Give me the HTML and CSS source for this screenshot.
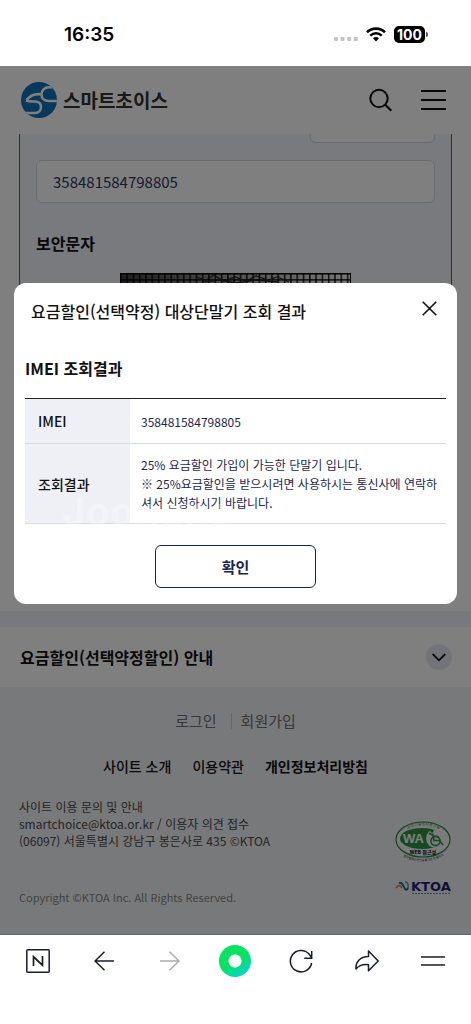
FILE: index.html
```
<!DOCTYPE html>
<html lang="ko">
<head>
  <meta charset="UTF-8">
  <meta name="viewport" content="width=device-width, initial-scale=1">
  <title>스마트초이스</title>
  <link rel="stylesheet" href="styles.css">
</head>
<body>
  <div class="status-bar">
    <span class="time">16:35</span>
    <div class="status-icons">
      <svg class="signal" width="24" height="4" viewBox="0 0 24 4" fill="#c4c4c4"><rect width="4" height="4" rx="1"/><rect x="6.6" width="4" height="4" rx="1"/><rect x="13.2" width="4" height="4" rx="1"/><rect x="19.8" width="4" height="4" rx="1"/></svg>
      <svg width="20" height="15" viewBox="0 0 20 15" fill="none" stroke="#000"><path d="M1 5.2C6 .4 14 .4 19 5.2" stroke-width="2.6"/><path d="M4.3 8.6c3.3-3 8.1-3 11.4 0" stroke-width="2.5"/><path d="M7 11.2c1.7-1.7 4.3-1.7 6 0l-3 3.300z" fill="#000" stroke="none"/></svg>
      <span class="battery">100</span>
    </div>
  </div>

  <div class="viewport">
    <header class="site-header">
      <a href="#" class="logo">
        <svg width="36" height="36" viewBox="0 0 36 36">
          <defs><clipPath id="disc"><circle cx="18" cy="18" r="18"/></clipPath></defs>
          <circle cx="18" cy="18" r="18" fill="#1070b8"/>
          <g clip-path="url(#disc)" fill="none" stroke="#fff" stroke-width="2.6">
            <path d="M37 19H28c-5 0-7.500-3-7.500-6.500 0-4 3-7.200 7.500-7.200h7"/>
            <path d="M20 12.300c-6-1-10.500 1-14.500 5.700" stroke-width="2.8"/>
            <path d="M5 18.500c3 1.300 5 1 8.500 1 4.500 0 6.500 2.500 6.500 5.500s-2 6-6 6H2"/>
          </g>
        </svg>
        <span>스마트초이스</span>
      </a>
      <div class="header-actions">
        <button type="button" class="icon-button" aria-label="검색">
          <svg width="24" height="24" viewBox="0 0 24 24" fill="none" stroke="#111" stroke-width="2"><circle cx="10" cy="10.500" r="8.700"/><path d="M16.300 16.800l6 6"/></svg>
        </button>
        <button type="button" class="icon-button" aria-label="전체메뉴">
          <svg width="25" height="22" viewBox="0 0 25 22" stroke="#111" stroke-width="2"><path d="M0 2h25M0 11h25M0 20h25"/></svg>
        </button>
      </div>
    </header>

    <main>
      <section class="search-section">
        <form class="search-panel">
          <select class="field kind" aria-label="구분"><option></option></select>
          <input class="field" type="text" value="358481584798805" aria-label="IMEI">
          <h2>보안문자</h2>
          <svg class="captcha" width="231" height="60" viewBox="0 0 231 60">
            <defs>
              <pattern id="grid" width="6.300" height="6" patternUnits="userSpaceOnUse"><path d="M0 .8h6.300M.8 0v6" stroke="#000" stroke-width="1.300"/></pattern>
              <linearGradient id="shade"><stop offset="0" stop-color="#3c3c3c"/><stop offset=".3" stop-color="#777"/><stop offset=".55" stop-color="#aaa"/><stop offset="1" stop-color="#f0f0f0"/></linearGradient>
            </defs>
            <rect width="231" height="60" fill="url(#shade)"/>
            <rect width="231" height="60" fill="url(#grid)"/>
            <path d="M76 4l10 3 8-5 9 6 12-4 11 4 10-5 12 4 9-3 12 5M82 9l18-2 16 3 20-3 22 2" fill="none" stroke="#222" stroke-width="1.300"/>
            <path d="M.5 60V.5h230V60" fill="none" stroke="#000"/>
          </svg>
        </form>
      </section>
      <section class="guide">
        <h2>요금할인(선택약정할인) 안내</h2>
        <button type="button" class="toggle" aria-label="펼치기">
          <svg width="14" height="9" viewBox="0 0 14 9" fill="none" stroke="#111" stroke-width="1.800"><path d="M.7 1L7 7.300 13.300 1"/></svg>
        </button>
      </section>
    </main>

    <footer class="site-footer">
      <nav class="member-links"><a href="#">로그인</a><a href="#">회원가입</a></nav>
      <nav class="policy-links"><a href="#">사이트 소개</a><a href="#">이용약관</a><a href="#" class="privacy">개인정보처리방침</a></nav>
      <div class="footer-info">
        <div class="footer-text">
          <address>사이트 이용 문의 및 안내<br>smartchoice@ktoa.or.kr / 이용자 의견 접수<br>(06097) 서울특별시 강남구 봉은사로 435 ©KTOA</address>
          <p>Copyright ©KTOA Inc. All Rights Reserved.</p>
        </div>
        <div class="marks">
          <svg width="57" height="44" viewBox="0 0 57 44">
            <defs><path id="arc-top" d="M8 13Q28-3 49 13"/><path id="arc-bottom" d="M1 32Q28 51 56 31"/></defs>
            <ellipse cx="28" cy="19.500" rx="27" ry="17.500" fill="#f4f6f4" stroke="#2a8a3c" stroke-width="1.200"/>
            <ellipse cx="27" cy="18.500" rx="22" ry="10.500" fill="#2a9440"/>
            <ellipse cx="40.500" cy="18.500" rx="9.500" ry="9.500" fill="#f4f6f4"/>
            <g fill="none" stroke="#2a9440" stroke-width="1.600"><circle cx="40.500" cy="21" r="4.600"/><path d="M37.500 13.500l1.500 7h5.500l3.500 4.500M38 16.500h5.500M34 13.500l4 1.500"/></g>
            <circle cx="37" cy="11" r="1.700" fill="#2a9440"/>
            <text class="wa" x="8" y="23">WA</text>
            <text class="mark-web" x="28" y="34">WEB 접근성</text>
            <text class="mark-small"><textPath href="#arc-top" startOffset="50%">과학기술정보통신부</textPath></text>
            <text class="mark-small dark"><textPath href="#arc-bottom" startOffset="50%">한국웹접근성인증평가원 인증마크</textPath></text>
          </svg>
          <svg width="57" height="18" viewBox="0 0 57 18">
            <path d="M1 10q3-5 6 0" fill="none" stroke="#e88b30" stroke-width="1.800"/><path d="M4 5q3-1 5 4t4 1" fill="none" stroke="#2867b8" stroke-width="2"/><path d="M10 4q4 0 3 6" fill="none" stroke="#57a56b" stroke-width="1.500"/>
            <text class="ktoa" x="16" y="13">KTOA</text>
            <path d="M17 15.500h39" stroke="#5689b5" stroke-dasharray="2 1"/>
          </svg>
        </div>
      </div>
    </footer>

    <div class="overlay">
      <div class="modal" role="dialog" aria-labelledby="modal-title">
        <div class="modal-header">
          <h2 id="modal-title">요금할인(선택약정) 대상단말기 조회 결과</h2>
          <button type="button" class="icon-button" aria-label="닫기">
            <svg width="15" height="15" viewBox="0 0 15 15" stroke="#111" stroke-width="1.600"><path d="M.7.7l13.600 13.600M14.300.7L.7 14.300"/></svg>
          </button>
        </div>
        <div class="modal-body">
          <h3>IMEI 조회결과</h3>
          <div class="result">
            <table>
              <tr><th scope="row">IMEI</th><td>358481584798805</td></tr>
              <tr><th scope="row">조회결과</th><td>25% 요금할인 가입이 가능한 단말기 입니다.<br>※ 25%요금할인을 받으시려면 사용하시는 통신사에 연락하<br>셔서 신청하시기 바랍니다.</td></tr>
            </table>
            <span class="watermark" aria-hidden="true">Joongna</span>
          </div>
          <button type="button" class="confirm">확인</button>
        </div>
      </div>
    </div>
  </div>

  <nav class="toolbar">
    <button type="button" aria-label="네이버 홈"><svg width="24" height="24" viewBox="0 0 24 24" fill="none" stroke="#1b1c2b" stroke-width="1.500"><rect x=".8" y=".8" width="22.400" height="22.400" rx="1"/><path d="M7.500 17V7.800l9 8.400V7" stroke-width="1.700"/></svg></button>
    <button type="button" aria-label="뒤로"><svg width="20" height="20" viewBox="0 0 20 20" fill="none" stroke="#1b1c2b" stroke-width="1.500"><path d="M20 10H1M10.500.8L1 10l9.500 9.200"/></svg></button>
    <button type="button" aria-label="앞으로" disabled><svg width="20" height="20" viewBox="0 0 20 20" fill="none" stroke="#aaa" stroke-width="1.500"><path d="M0 10h19M9.500.8L19 10l-9.500 9.200"/></svg></button>
    <button type="button" aria-label="그린닷"><span class="green-dot"></span></button>
    <button type="button" aria-label="새로고침"><svg width="24" height="24" viewBox="0 0 24 24" fill="none" stroke="#1b1c2b" stroke-width="1.500"><path d="M22.600 14A10.700 10.700 0 1 1 20 5l2.600 3.500M22.700 2v7.300h-7.500"/></svg></button>
    <button type="button" aria-label="공유"><svg width="24" height="22" viewBox="0 0 24 22" fill="none" stroke="#1b1c2b" stroke-width="1.500" stroke-linejoin="round"><path d="M13.500 1l9.700 10-9.700 9.700v-5.900C8 14 4 15.500 1 19 .3 12 5 6.800 13.500 6.500z"/></svg></button>
    <button type="button" aria-label="메뉴"><svg width="24" height="10" viewBox="0 0 24 10" stroke="#1b1c2b" stroke-width="1.500"><path d="M0 1h24M0 9h24"/></svg></button>
  </nav>
</body>
</html>
```
FILE: styles.css
```
* {
  box-sizing: border-box;
}
body {
  margin: 0;
  min-height: 100vh;
  display: flex;
  flex-direction: column;
  font-family: "Noto Sans CJK KR", "Liberation Sans", sans-serif;
  background-color: #fff;
  color: #111;
}
h2, h3, p {
  margin: 0;
}
h2, h3 {
  font-size: 16px;
  line-height: 24px;
}
a {
  color: inherit;
  text-decoration: none;
}
button {
  font-family: inherit;
  color: inherit;
  cursor: pointer;
}
svg {
  display: block;
}

/* status bar */
.status-bar {
  height: 66px;
  padding: 4px 46px 0 64px;
  display: flex;
  justify-content: space-between;
  align-items: center;
}
.time {
  font: 600 19px/24px Inter, sans-serif;
  color: #000;
}
.status-icons {
  display: flex;
  align-items: center;
  gap: 8px;
  margin-top: -2px;
}
.signal {
  margin-top: 10px;
}
.battery {
  position: relative;
  width: 31px;
  border-radius: 5px;
  background-color: #000;
  color: #fff;
  font: 700 14px/17px Inter, sans-serif;
  text-align: center;
}
.battery::after {
  content: '';
  position: absolute;
  top: 6px;
  right: -3px;
  width: 2px;
  height: 5px;
  border-radius: 0 2px 2px 0;
  background-color: #555;
}

/* page */
.viewport {
  position: relative;
  flex: 1;
  display: flex;
  flex-direction: column;
}
.site-header {
  height: 68px;
  padding: 0 25px 0 21px;
  display: flex;
  justify-content: space-between;
  align-items: center;
}
.logo {
  display: flex;
  align-items: center;
  gap: 6px;
  font-size: 19px;
  line-height: 28px;
  font-weight: 700;
  color: #333;
}
.header-actions {
  display: flex;
  align-items: center;
  gap: 28px;
}
.icon-button {
  padding: 0;
  border: none;
  background: none;
}
.search-section {
  overflow: hidden;
  padding: 0 19px 28px;
}
.search-panel {
  min-height: 500px;
  margin-top: -51px;
  padding: 16px;
  border: 1px solid #3264d8;
  background-color: #f2f5fb;
  display: flex;
  flex-direction: column;
}
.field {
  flex-shrink: 0;
  height: 43px;
  margin-bottom: 17px;
  padding: 0 16px;
  border: 1px solid #d4d8e0;
  border-radius: 6px;
  background-color: #fff;
  color: #2f3460;
  font-family: inherit;
  font-size: 15px;
}
.kind {
  width: 125px;
  align-self: flex-end;
  appearance: none;
}
.search-panel h2 {
  margin: 11px 0 18px;
}
.captcha {
  align-self: center;
}
.guide {
  padding: 17px 19px 17px 20px;
  border-top: 16px solid #f0f3f8;
  display: flex;
  justify-content: space-between;
  align-items: center;
}
.toggle {
  width: 26px;
  height: 26px;
  padding: 0;
  border: none;
  border-radius: 50%;
  background-color: #e6e9f2;
  display: grid;
  place-items: center;
}

/* footer */
.site-footer {
  flex: 1;
  padding: 22px 19px 26px;
  background-color: #f0f2f5;
}
.member-links,
.policy-links {
  display: flex;
  justify-content: center;
}
.member-links {
  font-size: 15px;
  line-height: 24px;
  color: #707070;
}
.member-links a + a {
  margin-left: 14px;
  padding-left: 10px;
  background: linear-gradient(#ccc, #ccc) 0 50% / 1px 16px no-repeat;
}
.policy-links {
  gap: 21px;
  margin-top: 21px;
  font-size: 14px;
  line-height: 24px;
  font-weight: 500;
}
.privacy {
  font-weight: 700;
}
.footer-info {
  display: flex;
  justify-content: space-between;
  margin-top: 20px;
  font-size: 12px;
  line-height: 17px;
}
.footer-info address {
  font-style: normal;
  color: #4a4a4a;
}
.footer-info p {
  margin-top: 40px;
  font-size: 11px;
  color: #888;
}
.marks {
  display: flex;
  flex-direction: column;
  gap: 14px;
  padding-top: 22px;
}
.wa {
  font: 700 13px "Liberation Sans", sans-serif;
  fill: #fff;
}
.mark-web {
  font-size: 5px;
  font-weight: 700;
  text-anchor: middle;
}
.mark-small {
  font-size: 4px;
  text-anchor: middle;
  fill: #2a8a3c;
}
.dark {
  font-size: 3px;
  fill: #222;
}
.ktoa {
  font: 700 13px "DejaVu Sans", sans-serif;
  fill: #23237a;
}

/* result dialog */
.overlay {
  position: absolute;
  inset: 0;
  padding: 217px 14px 0;
  background-color: rgba(0, 0, 0, 0.5);
}
.modal {
  border-radius: 12px;
  background-color: #fff;
}
.modal-header {
  padding: 16px 20px 16px 17px;
  display: flex;
  justify-content: space-between;
  align-items: center;
}
.modal-header h2 {
  font-weight: 500;
}
.modal-header .icon-button {
  margin-top: -6px;
}
.modal-body {
  padding: 17px 11px 16px;
}
.result {
  position: relative;
  margin: 18px 0 21px;
}
table {
  width: 100%;
  border-collapse: collapse;
  border-top: 1px solid #222;
}
tr {
  border-bottom: 1px solid #d8dbe0;
}
th {
  width: 105px;
  padding: 10px 13px;
  background-color: #eff0f5;
  font-size: 14px;
  line-height: 24px;
  font-weight: 500;
  text-align: left;
}
td {
  padding: 11px 0 11px 11px;
  font-size: 12px;
  line-height: 19px;
  color: #22264f;
}
.watermark {
  position: absolute;
  left: 37px;
  bottom: -11px;
  font: 700 40px/46px Inter, sans-serif;
  color: rgba(255, 255, 255, 0.3);
  pointer-events: none;
}
.confirm {
  display: block;
  width: 161px;
  height: 43px;
  margin: 0 auto;
  border: 1px solid #17244f;
  border-radius: 6px;
  background-color: #fff;
  color: #17244f;
  font-size: 15px;
  font-weight: 700;
}

/* browser toolbar */
.toolbar {
  height: 90px;
  padding: 0 5px;
  border-top: 1px solid #666;
  display: grid;
  grid-template-columns: repeat(7, 1fr);
}
.toolbar button {
  height: 52px;
  padding: 0;
  border: none;
  background: none;
  display: grid;
  place-items: center;
}
.green-dot {
  width: 32px;
  height: 32px;
  border-radius: 50%;
  background: radial-gradient(circle, #fff 6px, transparent 7px), linear-gradient(150deg, #06e35f 50%, #00d0f0);
}
```
